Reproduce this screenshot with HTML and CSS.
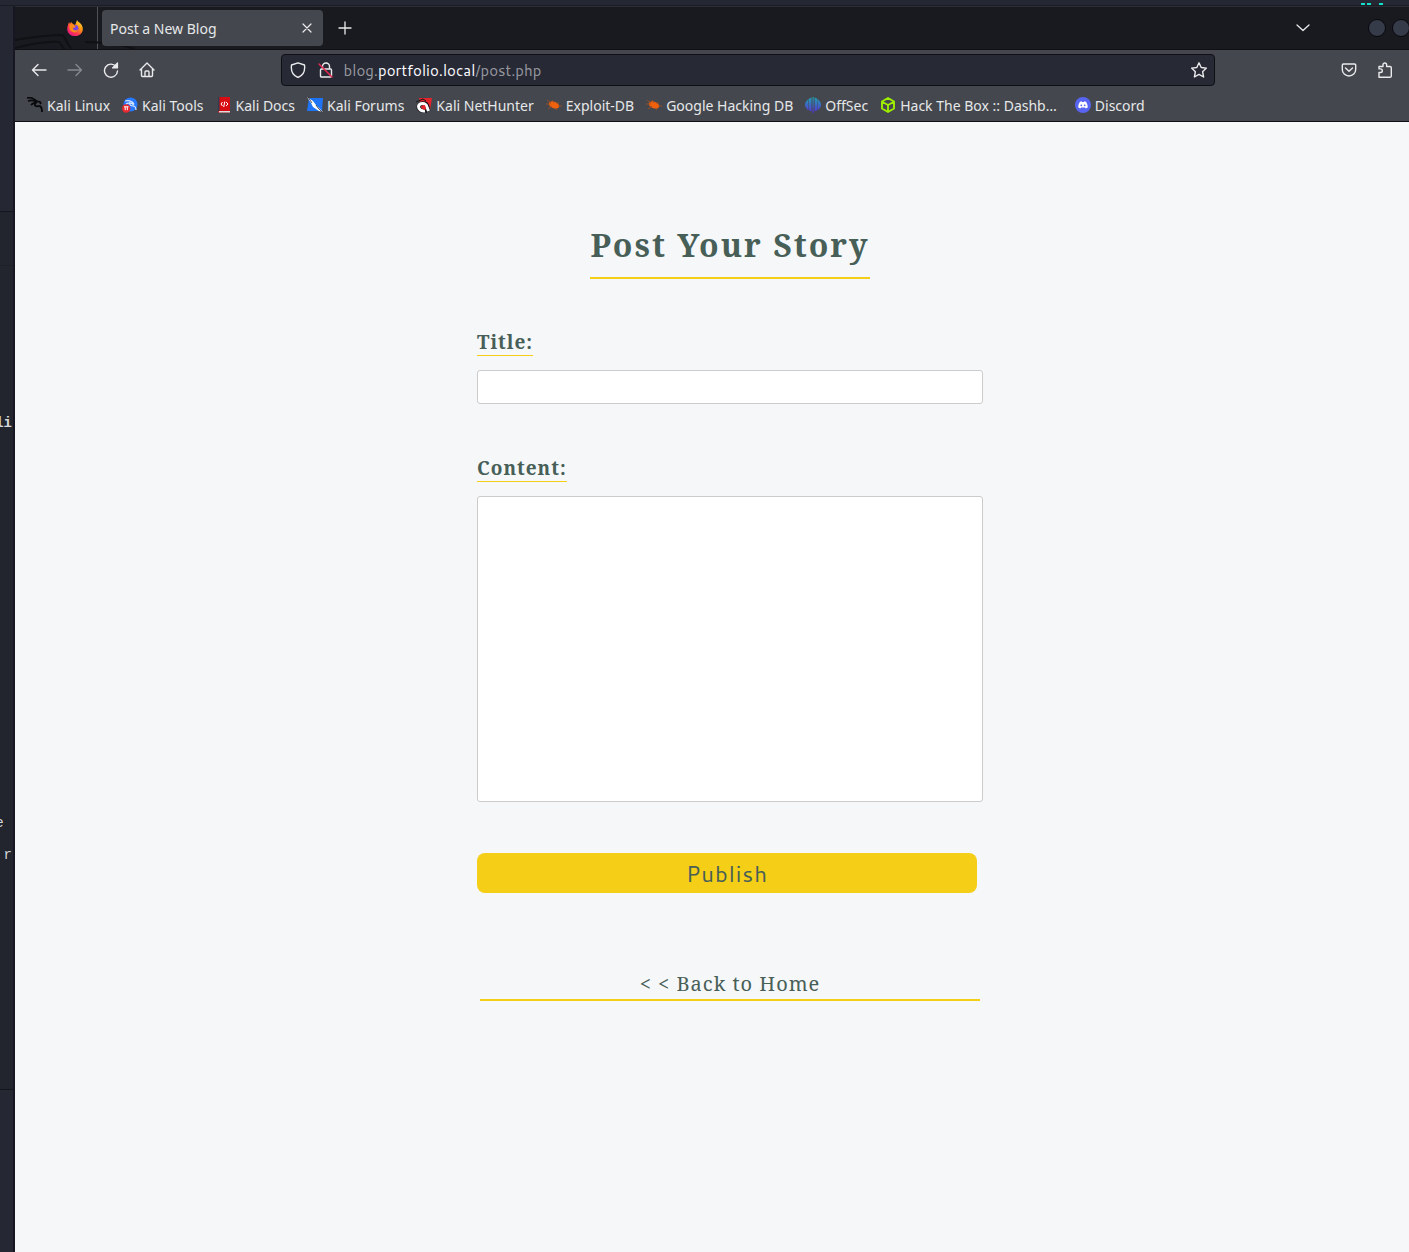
FILE: index.html
```html
<!DOCTYPE html>
<html lang="en">
<head>
<meta charset="utf-8">
<title>Post a New Blog</title>
<link rel="stylesheet" href="styles.css">
</head>
<body>
<div class="panel" aria-hidden="true"><i></i><i></i><i class="wide"></i></div>
<div class="desktop">
  <aside class="backdrop" aria-hidden="true">
    <div class="wallpaper"></div>
    <div class="terminal">
      <div class="terminal-bar"></div>
      <pre class="line prompt">li</pre>
      <pre class="line entry">e </pre>
      <pre class="line">r</pre>
    </div>
  </aside>
  <div class="window">
    <header class="chrome">
      <div class="tabs">
        <div class="tabs-start">
          <svg class="dragon" viewBox="0 0 130 16" width="130" height="16"><path d="M0 7C18 4 32 2 48 2l8 14M0 15C20 10 33 8 44 9l6 8M70 9c20 0 36 2 50 7" fill="none" stroke="#101115" stroke-width="2"/></svg>
          <button class="icon firefox" aria-label="Firefox View">
            <svg viewBox="0 0 16 16" width="16" height="16"><defs><linearGradient id="fx" x1="1" y1="0" x2=".2" y2="1"><stop offset="0" stop-color="#fff44f"/><stop offset=".4" stop-color="#ff980e"/><stop offset=".7" stop-color="#ff3750"/><stop offset="1" stop-color="#e31587"/></linearGradient></defs><path d="M10 0c1 2 2 2 4 4 4 5 1 12-6 12S-1 10 1 5l1-3 1 2 1-2 2 2 2 1 1-2z" fill="url(#fx)"/><circle cx="8" cy="8.500" r="3.400" fill="#7542e5"/><path d="M3 4l4 1 2 2-3 1c0 3 4 3 5 1 0 3-3 4-5 3C2 11 2 7 3 4z" fill="#ff8a16"/></svg>
          </button>
        </div>
        <div class="tab"><span>Post a New Blog</span>
          <button class="icon" aria-label="Close tab"><svg viewBox="0 0 16 16" width="16" height="16"><path d="M4 4l8 8M12 4l-8 8"/></svg></button>
        </div>
        <button class="icon new-tab" aria-label="New tab"><svg viewBox="0 0 16 16" width="16" height="16"><path d="M8 2v12M2 8h12" stroke-width="1.300"/></svg></button>
        <button class="icon list-tabs" aria-label="List all tabs"><svg viewBox="0 0 16 16" width="16" height="16"><path d="M2 5l6 5.500L14 5" stroke-width="1.300"/></svg></button>
        <div class="window-buttons"><button aria-label="Minimize"></button><button aria-label="Maximize"></button><button aria-label="Close"></button></div>
      </div>
      <nav class="toolbar" aria-label="Navigation">
        <button class="icon" aria-label="Back"><svg viewBox="0 0 16 16" width="16" height="16"><path d="M15 8H1.500M7 2.500L1.500 8 7 13.500" stroke-width="1.400"/></svg></button>
        <button class="icon" aria-label="Forward" disabled><svg viewBox="0 0 16 16" width="16" height="16"><path d="M1 8h13.500M9 2.500L14.500 8 9 13.500" stroke-width="1.400"/></svg></button>
        <button class="icon" aria-label="Reload"><svg viewBox="0 0 16 16" width="16" height="16"><path d="M13 4.500A6.500 6.500 0 1 0 14.500 9" stroke-width="1.400"/><path d="M14.500 1v5h-5z" fill="#e9eaec"/></svg></button>
        <button class="icon" aria-label="Home"><svg viewBox="0 0 16 16" width="16" height="16"><path d="M1 8l7-7 7 7M2.500 7v6.500a1 1 0 0 0 1 1h9a1 1 0 0 0 1-1V7M6 14.500V10a1 1 0 0 1 1-1h2a1 1 0 0 1 1 1v4.500" stroke-width="1.400"/></svg></button>
        <div class="spring"></div>
        <div class="url">
          <svg class="glyph" viewBox="0 0 16 16" width="16" height="16"><path d="M8 .8L14.500 3c.8 6-1.500 10.500-6.500 12.500C3 13.500.7 9 1.500 3z" stroke-width="1.400"/></svg>
          <svg class="glyph lock" viewBox="0 0 16 16" width="16" height="16"><path d="M4.500 7V4.500a3.500 3.500 0 0 1 7 0V7M3.500 7h9a1 1 0 0 1 1 1v6a1 1 0 0 1-1 1h-9a1 1 0 0 1-1-1V8a1 1 0 0 1 1-1z" stroke-width="1.400"/><path d="M1 2l13 13" stroke="#e22850" stroke-width="1.500"/></svg>
          <a class="address" href="#">blog.<b>portfolio.local</b>/post.php</a>
          <button class="icon star" aria-label="Bookmark this page"><svg viewBox="0 0 16 16" width="16" height="16"><path d="M8 .8l2.200 4.700 5.200.6-3.800 3.600 1 5.300L8 12.400 3.400 15l1-5.300L.6 6.100l5.200-.6z" stroke-width="1.400"/></svg></button>
        </div>
        <div class="spring"></div>
        <button class="icon" aria-label="Save to Pocket"><svg viewBox="0 0 16 16" width="16" height="16"><path d="M2.500 2h11a1.200 1.200 0 0 1 1.200 1.200V7.500a6.700 6.500 0 0 1-13.400 0V3.200A1.200 1.200 0 0 1 2.500 2zM4.500 6L8 9.300 11.500 6" stroke-width="1.400"/></svg></button>
        <button class="icon" aria-label="Extensions"><svg viewBox="0 0 16 16" width="16" height="16"><path d="M2 15.300v-4.800h1.500a1.800 1.800 0 0 0 0-3.600H2V4.500h4V2.800a1.800 1.800 0 0 1 3.600 0v1.700h3.400a1.300 1.300 0 0 1 1.300 1.300V14a1.300 1.300 0 0 1-1.300 1.300z" stroke-width="1.400"/></svg></button>
        <button class="icon" aria-label="Menu"><svg viewBox="0 0 16 16" width="16" height="16"><path d="M1 3h14M1 8h14M1 13h14"/></svg></button>
      </nav>
      <nav class="bookmarks" aria-label="Bookmarks">
        <a href="#"><svg viewBox="0 0 16 16" width="16" height="16"><path d="M0 1c4-1 8 1 10 4M1 4c3-1 6-1 8 1M4 8c2-2 4-3 6-2M9 5c-3 3 0 5 3 4 3 0 3 3 3 6M9 4l4 1 1 2" fill="none" stroke="#08090b" stroke-width="1.800"/></svg><span>Kali Linux</span></a>
        <a href="#"><svg viewBox="0 0 16 16" width="16" height="16"><circle cx="8.500" cy="7.500" r="7" fill="#2777ff"/><path d="M3 4c4-1 7 0 9 3M4 7c3-2 6-1 8 1M8 5c-1 3 1 4 3 4s3 2 3 4" fill="none" stroke="#d8e9ff" stroke-width="1.200"/><circle cx="4.200" cy="11.500" r="4.200" fill="#e8282e"/><path d="M2 9.800h4.500M3.200 10v3.200M5.300 10v3.200" stroke="#fff"/></svg><span>Kali Tools</span></a>
        <a href="#"><svg viewBox="0 0 16 16" width="16" height="16"><path d="M2 0h12v15.500H2z" fill="#d80d13"/><path d="M2 0h1.500v14H2z" fill="#343b4a"/><path d="M3 14h11v1.500H3z" fill="#ddd"/><path d="M6.500 5L5 7l1.500 2M10 5l2 2-2 2M8.800 4.500L7.700 10" stroke="#fff" fill="none"/></svg><span>Kali Docs</span></a>
        <a href="#"><svg viewBox="0 0 16 16" width="16" height="16"><path d="M2 1h14l-1 13H0z" fill="#1e74f5"/><path d="M0 0l6 4 3 4 7 7-4-1-6-4-2-4z" fill="#fff"/><path d="M1 0l4 6M9 8l2 3 4 4" stroke="#101318" stroke-width=".7" fill="none"/></svg><span>Kali Forums</span></a>
        <a href="#"><svg viewBox="0 0 16 16" width="16" height="16"><path d="M3 1h13l-2 12H6z" fill="#e5242b"/><path d="M12.500 14l-1-4C10.500 4 3 6 2.500 10c0 3 4 5 8 4" fill="none" stroke="#17181c" stroke-width="4"/><path d="M12.500 14l-1.500-4C9.500 5 3 6 2.500 9.500c0 3 3 5 6.500 4.500" fill="none" stroke="#fff" stroke-width="3"/><path d="M0 5l7-3 3 2" fill="none" stroke="#17181c"/><path d="M6 9l3-1 1 4-2 1z" fill="#e5242b"/></svg><span>Kali NetHunter</span></a>
        <a href="#"><svg viewBox="0 0 16 16" width="16" height="16"><ellipse cx="8" cy="8" rx="5.500" ry="3.300" transform="rotate(22 8 8)" fill="#f0610d"/><path d="M1 3l4 3M0 7h5M2 12l4-3M6 3l2 3M10 6l3 0M12 9h4M9 11l2 2" stroke="#a8501e" stroke-width=".8"/></svg><span>Exploit-DB</span></a>
        <a href="#"><svg viewBox="0 0 16 16" width="16" height="16"><ellipse cx="8" cy="8" rx="5.500" ry="3.300" transform="rotate(22 8 8)" fill="#f0610d"/><path d="M1 3l4 3M0 7h5M2 12l4-3M6 3l2 3M10 6l3 0M12 9h4M9 11l2 2" stroke="#a8501e" stroke-width=".8"/></svg><span>Google Hacking DB</span></a>
        <a href="#"><svg viewBox="0 0 16 16" width="16" height="16"><defs><linearGradient id="os" gradientUnits="userSpaceOnUse" x1="0" y1="0" x2="0" y2="16"><stop stop-color="#20a2b5"/><stop offset="1" stop-color="#5730d0"/></linearGradient></defs><path d="M3 2.500v10.500C-1 10-1 5.500 3 2.500zM3.500 2l3-1.500v14l-3-1.500zM7.500 0h1.200v16H7.500zM9.600.5l3 1.500v11l-3 1.500zM13 2.500c4 3 4 7.500 0 10.500z" fill="url(#os)"/></svg><span>OffSec</span></a>
        <a href="#"><svg viewBox="0 0 16 16" width="16" height="16"><path d="M8 1l6 3.500v7L8 15l-6-3.500v-7zM2.500 5L8 8l5.500-3M8 8v6.500" fill="none" stroke="#9fef00" stroke-width="1.900" stroke-linejoin="round"/></svg><span>Hack The Box :: Dashb…</span></a>
        <a href="#" class="last"><svg viewBox="0 0 16 16" width="16" height="16"><circle cx="8" cy="8" r="8" fill="#5865f2"/><path d="M5 4.800l1.500-.5.5.7h2l.5-.7 1.500.5c1.300 2 1.800 3.700 1.700 5.700l-2 1-.7-1h-4l-.7 1-2-1C3.200 8.500 3.700 6.800 5 4.800z" fill="#fff"/><circle cx="6.300" cy="8.300" r=".9" fill="#5865f2"/><circle cx="9.700" cy="8.300" r=".9" fill="#5865f2"/></svg><span>Discord</span></a>
      </nav>
    </header>
    <main class="page">
      <h1>Post Your Story</h1>
      <form>
        <label for="title">Title:</label>
        <input id="title" type="text">
        <label for="content">Content:</label>
        <textarea id="content"></textarea>
        <button class="publish" type="button">Publish</button>
      </form>
      <a class="back" href="#">&lt; &lt; Back to Home</a>
    </main>
  </div>
</div>
</body>
</html>
```
FILE: styles.css
```css
* { box-sizing: border-box; }

body {
  margin: 0;
  min-height: 100vh;
  display: flex;
  flex-direction: column;
  overflow: hidden;
  background: #252733;
  font-family: "Noto Sans", sans-serif;
  font-size: 14px;
}

button {
  margin: 0;
  padding: 0;
  border: 0;
  background: none;
  font: inherit;
}

a { color: inherit; text-decoration: none; }

/* strip of desktop above the window */
.panel {
  height: 6px;
  display: flex;
  justify-content: flex-end;
  align-items: flex-end;
  gap: 2px;
  padding: 0 26px 0 0;
  border-bottom: 1px solid #1b1c24;
}
.panel i { width: 4px; height: 2px; background: #12e0c8; }
.panel .wide { margin-left: 6px; }

.desktop { flex: 1; display: flex; }

.backdrop {
  flex: 0 0 15px;
  display: flex;
  flex-direction: column;
  overflow: hidden;
  border-right: 2px solid #161722;
}
.wallpaper { height: 205px; }
.terminal {
  height: 879px;
  background: #22252e;
  border: solid #14161d;
  border-width: 1px 0;
}
.terminal-bar { height: 54px; border-bottom: 1px solid #1d2027; }
.line {
  display: flex;
  justify-content: flex-end;
  margin: 0;
  padding-right: 1px;
  color: #d5d7da;
  font: 14px/32px "Liberation Mono", monospace;
}
.prompt { margin: 141px 0 368px; font-weight: bold; }

.window {
  flex: 1;
  display: flex;
  flex-direction: column;
  min-width: 0;
  margin-right: -36px;
  background: #f5f7f9;
}

.chrome { color: #e6e7e9; border-bottom: 1px solid #0d0e13; background: #44474e; }

.icon {
  width: 36px;
  height: 36px;
  display: grid;
  place-items: center;
}
.icon svg, .glyph { fill: none; stroke: #e9eaec; stroke-width: 1.2; stroke-linejoin: round; stroke-linecap: round; }
.icon:disabled { opacity: .4; }

.tabs {
  height: 44px;
  display: flex;
  align-items: center;
  background: #191a1f;
  border: solid #0f1015;
  border-width: 1px 0;
  border-top-color: #2c2e38;
}
.tabs-start {
  position: relative;
  width: 83px;
  height: 100%;
  display: flex;
  align-items: center;
  justify-content: flex-end;
  padding-right: 4px;
  border-right: 1px solid #505257;
}
.dragon { position: absolute; left: 0; bottom: 0; }
.firefox { position: relative; }
.firefox svg { stroke: none; }
.tab {
  position: relative;
  width: 221px;
  height: 36px;
  display: flex;
  align-items: center;
  justify-content: space-between;
  margin: 0 4px;
  padding-left: 8px;
  border-radius: 4px;
  background: #44474e;
}
.tab .icon { width: 32px; }
.list-tabs { margin-left: auto; }
.window-buttons { display: flex; gap: 6px; padding: 0 11px 0 47px; }
.window-buttons button {
  width: 18px;
  height: 18px;
  border: 1px solid #08090d;
  border-radius: 50%;
  background: #363b49;
}

.toolbar { height: 40px; display: flex; align-items: center; padding: 0 6px; }
.spring { flex: 1; }
.url {
  flex: 8;
  height: 32px;
  display: flex;
  align-items: center;
  padding-left: 8px;
  border: 1px solid #0e0f15;
  border-radius: 4px;
  background: #272935;
}
.lock { margin: 0 10px 0 12px; }
.address { flex: 1; color: #96989f; font-family: Cantarell, "Noto Sans", sans-serif; font-size: 15px; }
.address b { color: #fbfbfe; font-weight: normal; }
.star { width: 30px; height: 30px; }

.bookmarks { height: 31px; display: flex; align-items: center; gap: 12px; padding: 0 12px 1px; }
.bookmarks a { display: flex; align-items: center; gap: 4px; }
.bookmarks svg { flex: none; }
.bookmarks span { white-space: nowrap; }
.bookmarks .last { margin-left: 6px; }

.page {
  flex: 1;
  display: flex;
  flex-direction: column;
  align-items: center;
  padding: 100px 16px 0;
  color: #485f58;
  font-family: "Noto Serif", "Droid Serif", "DejaVu Serif", serif;
}
h1 {
  margin: 0 0 48px;
  padding-bottom: 9px;
  border-bottom: 2px solid #f5ce17;
  font-size: 32px;
  line-height: 46px;
  letter-spacing: 2px;
}
form {
  width: 100%;
  max-width: 506px;
  display: flex;
  flex-direction: column;
  align-items: flex-start;
}
label {
  margin-bottom: 14px;
  padding-top: 2px;
  border-bottom: 1px solid #f5ce17;
  font-size: 19px;
  font-weight: bold;
  line-height: 26px;
  letter-spacing: 1px;
}
input, textarea {
  width: 100%;
  margin: 0 0 49px;
  padding: 8px;
  border: 1px solid #ccc;
  border-radius: 3px;
  background: #fff;
  font: inherit;
  resize: none;
}
input { height: 34px; }
textarea { height: 306px; margin-bottom: 51px; }
.publish {
  width: 100%;
  max-width: 500px;
  height: 40px;
  padding-top: 2px;
  border-radius: 8px;
  background: #f5ce17;
  color: #485f58;
  font: 22px/38px Cantarell, "Noto Sans", sans-serif;
  letter-spacing: 1px;
}
.back {
  width: 100%;
  max-width: 500px;
  margin-top: 76px;
  border-bottom: 2px solid #f5ce17;
  font-size: 20px;
  line-height: 30px;
  letter-spacing: 1px;
  text-align: center;
}
```
